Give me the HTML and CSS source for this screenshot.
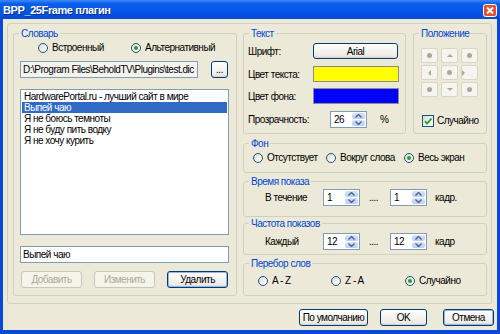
FILE: index.html
```html
<!DOCTYPE html>
<html lang="ru">
<head>
  <meta charset="UTF-8" />
  <title>BPP_25Frame плагин</title>
  <link rel="stylesheet" href="styles.css">
</head>
<body>
  <div class="window">
    <div class="titlebar">
      <span class="title">BPP_25Frame плагин</span>
      <svg class="close" width="14" height="13" viewBox="0 0 14 13">
        <rect x="0.5" y="0.5" width="13" height="12" rx="2" fill="#E1522E" stroke="#fff"/>
        <path d="M4 3.5 L10 9.5 M10 3.5 L4 9.5" stroke="#fff" stroke-width="1.8"/>
      </svg>
    </div>

    <div class="client">
      <div class="frame">

        <!-- Словарь -->
        <div class="group dict">
          <div class="group-title">Словарь</div>
          <div class="dict-body">
            <div class="dict-radios">
              <span class="radio first"><span class="rb"></span>Встроенный</span>
              <span class="radio"><span class="rb on"></span>Альтернативный</span>
            </div>
            <div class="path-row">
              <div class="edit path">D:\Program Files\BeholdTV\Plugins\test.dic</div>
              <button class="btn browse">...</button>
            </div>
            <div class="listbox">
              <div class="item">HardwarePortal.ru - лучший сайт в мире</div>
              <div class="item selected">Выпей чаю</div>
              <div class="item">Я не боюсь темноты</div>
              <div class="item">Я не буду пить водку</div>
              <div class="item">Я не хочу курить</div>
            </div>
            <div class="edit phrase">Выпей чаю</div>
            <div class="dict-buttons">
              <button class="btn disabled">Добавить</button>
              <button class="btn disabled">Изменить</button>
              <button class="btn focus">Удалить</button>
            </div>
          </div>
        </div>

        <div class="right">
          <div class="row-top">
            <!-- Текст -->
            <div class="group text-group">
              <div class="group-title">Текст</div>
              <div class="text-body">
                <div class="field-row r1">
                  <span class="lbl">Шрифт:</span>
                  <button class="btn font-btn">Arial</button>
                </div>
                <div class="field-row r2">
                  <span class="lbl">Цвет текста:</span>
                  <span class="swatch yellow"></span>
                </div>
                <div class="field-row r3">
                  <span class="lbl">Цвет фона:</span>
                  <span class="swatch blue"></span>
                </div>
                <div class="field-row r4">
                  <span class="lbl wide">Прозрачность:</span>
                  <div class="spin">
                    <span class="val">26</span>
                    <span class="arrows">
                      <span class="arr"><svg width="7" height="4" viewBox="0 0 7 4"><path d="M0.5 3.5 L3.5 0.5 L6.5 3.5" fill="none" stroke="#4D6185" stroke-width="1.4"/></svg></span>
                      <span class="arr"><svg width="7" height="4" viewBox="0 0 7 4"><path d="M0.5 0.5 L3.5 3.5 L6.5 0.5" fill="none" stroke="#4D6185" stroke-width="1.4"/></svg></span>
                    </span>
                  </div>
                  <span class="pct">%</span>
                </div>
              </div>
            </div>

            <!-- Положение -->
            <div class="group pos-group">
              <div class="group-title">Положение</div>
              <div class="pos-body">
                <div class="pos-grid">
                  <span class="pos-btn"><i class="dot"></i></span>
                  <span class="pos-btn"><i class="tri up"></i></span>
                  <span class="pos-btn"><i class="dot"></i></span>
                  <span class="pos-btn"><i class="tri left"></i></span>
                  <span class="pos-btn"><i class="dot"></i></span>
                  <span class="pos-btn"><i class="tri right"></i></span>
                  <span class="pos-btn"><i class="dot"></i></span>
                  <span class="pos-btn"><i class="tri down"></i></span>
                  <span class="pos-btn"><i class="dot"></i></span>
                </div>
                <div class="check-row">
                  <span class="cb">
                    <svg width="10" height="10" viewBox="0 0 10 10"><path d="M2 5 L4 7.5 L8.5 2.5" fill="none" stroke="#21A121" stroke-width="1.8"/></svg>
                  </span>
                  Случайно
                </div>
              </div>
            </div>
          </div>

          <!-- Фон -->
          <div class="group bg-group">
            <div class="group-title">Фон</div>
            <div class="bg-body">
              <span class="radio w73"><span class="rb"></span>Отсутствует</span>
              <span class="radio w78"><span class="rb"></span>Вокруг слова</span>
              <span class="radio"><span class="rb on"></span>Весь экран</span>
            </div>
          </div>

          <!-- Время показа -->
          <div class="group time-group">
            <div class="group-title">Время показа</div>
            <div class="spin-row t1">
              <span class="lbl">В течение</span>
              <div class="spin">
                <span class="val">1</span>
                <span class="arrows">
                  <span class="arr"><svg width="7" height="4" viewBox="0 0 7 4"><path d="M0.5 3.5 L3.5 0.5 L6.5 3.5" fill="none" stroke="#4D6185" stroke-width="1.4"/></svg></span>
                  <span class="arr"><svg width="7" height="4" viewBox="0 0 7 4"><path d="M0.5 0.5 L3.5 3.5 L6.5 0.5" fill="none" stroke="#4D6185" stroke-width="1.4"/></svg></span>
                </span>
              </div>
              <span class="dots">....</span>
              <div class="spin">
                <span class="val">1</span>
                <span class="arrows">
                  <span class="arr"><svg width="7" height="4" viewBox="0 0 7 4"><path d="M0.5 3.5 L3.5 0.5 L6.5 3.5" fill="none" stroke="#4D6185" stroke-width="1.4"/></svg></span>
                  <span class="arr"><svg width="7" height="4" viewBox="0 0 7 4"><path d="M0.5 0.5 L3.5 3.5 L6.5 0.5" fill="none" stroke="#4D6185" stroke-width="1.4"/></svg></span>
                </span>
              </div>
              <span class="unit">кадр.</span>
            </div>
          </div>

          <!-- Частота показов -->
          <div class="group freq-group">
            <div class="group-title">Частота показов</div>
            <div class="spin-row t2">
              <span class="lbl">Каждый</span>
              <div class="spin">
                <span class="val">12</span>
                <span class="arrows">
                  <span class="arr"><svg width="7" height="4" viewBox="0 0 7 4"><path d="M0.5 3.5 L3.5 0.5 L6.5 3.5" fill="none" stroke="#4D6185" stroke-width="1.4"/></svg></span>
                  <span class="arr"><svg width="7" height="4" viewBox="0 0 7 4"><path d="M0.5 0.5 L3.5 3.5 L6.5 0.5" fill="none" stroke="#4D6185" stroke-width="1.4"/></svg></span>
                </span>
              </div>
              <span class="dots">....</span>
              <div class="spin">
                <span class="val">12</span>
                <span class="arrows">
                  <span class="arr"><svg width="7" height="4" viewBox="0 0 7 4"><path d="M0.5 3.5 L3.5 0.5 L6.5 3.5" fill="none" stroke="#4D6185" stroke-width="1.4"/></svg></span>
                  <span class="arr"><svg width="7" height="4" viewBox="0 0 7 4"><path d="M0.5 0.5 L3.5 3.5 L6.5 0.5" fill="none" stroke="#4D6185" stroke-width="1.4"/></svg></span>
                </span>
              </div>
              <span class="unit">кадр</span>
            </div>
          </div>

          <!-- Перебор слов -->
          <div class="group order-group">
            <div class="group-title">Перебор слов</div>
            <div class="order-body">
              <span class="radio w73"><span class="rb"></span>A - Z</span>
              <span class="radio w74"><span class="rb"></span>Z - A</span>
              <span class="radio"><span class="rb on"></span>Случайно</span>
            </div>
          </div>
        </div>
      </div>

      <div class="footer">
        <button class="btn default-btn">По умолчанию</button>
        <button class="btn ok-btn">OK</button>
        <button class="btn focus cancel-btn">Отмена</button>
      </div>
    </div>
  </div>
</body>
</html>
```

FILE: styles.css
```css
* {
  box-sizing: border-box;
}

body {
  margin: 0;
  font-family: "Liberation Sans", Arial, sans-serif;
  font-size: 10px;
  letter-spacing: -0.5px;
  color: #000;
}

.window {
  width: 500px;
  height: 334px;
  background: #0A48D8;
  display: flex;
  flex-direction: column;
}

.titlebar {
  height: 19px;
  background: linear-gradient(to bottom, #3A8CF8 0%, #0A5CEA 20%, #0556E6 60%, #0049D6 100%);
  display: flex;
  align-items: center;
  justify-content: space-between;
  padding: 0 3px 0 3px;
  color: #fff;
  font-weight: bold;
  font-size: 11px;
  letter-spacing: -0.4px;
}

.title {
  text-shadow: 1px 1px 0 #0A2C8A;
}

.close {
  display: block;
  margin-top: 1px;
}

.client {
  flex: 1;
  margin: 0 3px 4px 3px;
  background: #ECE9D8;
  padding: 4px 0 0 4px;
}

.frame {
  width: 485px;
  height: 281px;
  border: 1px solid #D0D0BF;
  border-radius: 3px;
  padding: 9px 4px 7px 5px;
  display: flex;
  gap: 6px;
}

/* group boxes */
.group {
  border: 1px solid #D0D0BF;
  border-radius: 3px;
}

.group-title {
  display: table;
  margin: -7px 0 0 5px;
  padding: 0 2px;
  height: 13px;
  line-height: 13px;
  background: #ECE9D8;
  color: #0046D5;
}

/* controls */
.btn {
  font: inherit;
  letter-spacing: inherit;
  color: #000;
  height: 17px;
  padding: 0;
  border: 1px solid #003C74;
  border-radius: 3px;
  background: linear-gradient(to bottom, #FFFFFF 0%, #F4F3EE 50%, #ECEBE6 85%, #D6D0C5 100%);
}

.btn.disabled {
  color: #ACA899;
  border-color: #C9C7BA;
  background: #F5F4EA;
}

.btn.focus {
  box-shadow: inset 0 0 0 1px #99B6EA;
}

.edit {
  height: 17px;
  border: 1px solid #7F9DB9;
  background: #fff;
  padding: 0 2px;
  line-height: 15px;
  white-space: nowrap;
  overflow: hidden;
}

.radio {
  display: inline-flex;
  align-items: center;
  height: 13px;
  white-space: nowrap;
}

.rb {
  width: 10px;
  height: 10px;
  flex: none;
  border: 1px solid #1C5180;
  border-radius: 50%;
  background: linear-gradient(135deg, #DCDCD5, #FFFFFF);
  margin-right: 4px;
  display: inline-flex;
  align-items: center;
  justify-content: center;
}

.rb.on::after {
  content: "";
  width: 4px;
  height: 4px;
  border-radius: 50%;
  background: #21A121;
}

.spin {
  width: 37px;
  height: 17px;
  border: 1px solid #7F9DB9;
  background: #fff;
  display: flex;
}

.spin .val {
  flex: 1;
  padding-left: 3px;
  line-height: 15px;
}

.spin .arrows {
  width: 14px;
  display: flex;
  flex-direction: column;
  padding: 1px 1px 1px 0;
  gap: 1px;
}

.spin .arr {
  flex: 1;
  background: linear-gradient(to bottom, #D8E3FC, #B9CDF7);
  border-radius: 2px;
  display: flex;
  align-items: center;
  justify-content: center;
}

.spin .arr svg {
  display: block;
}

/* Словарь */
.dict {
  width: 224px;
}

.dict-body {
  padding: 0 7px 0 6px;
}

.dict-radios {
  display: flex;
  margin-top: 1px;
  padding-left: 18px;
}

.dict-radios .first {
  width: 93px;
}

.path-row {
  display: flex;
  margin-top: 7px;
}

.edit.path {
  width: 178px;
  background: #F4F3EE;
}

.browse {
  width: 17px;
  margin-left: 13px;
  line-height: 10px;
}

.listbox {
  margin-top: 11px;
  height: 146px;
  border: 1px solid #7F9DB9;
  background: #fff;
  padding: 1px;
}

.item {
  height: 11px;
  line-height: 11px;
  padding-left: 2px;
  white-space: nowrap;
}

.item.selected {
  background: #316AC5;
  color: #fff;
}

.edit.phrase {
  margin-top: 11px;
}

.dict-buttons {
  display: flex;
  justify-content: space-between;
  margin-top: 8px;
  padding: 0 1px;
}

.dict-buttons .btn {
  width: 61px;
}

/* right column */
.right {
  flex: 1;
  display: flex;
  flex-direction: column;
}

.row-top {
  display: flex;
  gap: 7px;
  height: 101px;
}

.text-group {
  width: 163px;
}

.pos-group {
  flex: 1;
}

.text-body {
  padding-left: 4px;
}

.field-row {
  display: flex;
  align-items: center;
  height: 16px;
}

.field-row.r1 { margin-top: 3px; }
.field-row.r2 { margin-top: 7px; }
.field-row.r3 { margin-top: 6px; }
.field-row.r4 { margin-top: 7px; height: 17px; }

.lbl {
  width: 65px;
  flex: none;
  white-space: nowrap;
}

.lbl.wide {
  width: 82px;
}

.font-btn {
  width: 85px;
  height: 16px;
}

.swatch {
  width: 86px;
  height: 16px;
  border: 1px solid #8C8C8C;
}

.swatch.yellow { background: #FFFF00; }
.swatch.blue { background: #0000FF; }

.pct {
  margin-left: 13px;
}

.pos-body {
  padding-left: 7px;
}

.pos-grid {
  margin-top: 8px;
  display: grid;
  grid-template-columns: repeat(3, 17px);
  grid-auto-rows: 15px;
  gap: 2px 3px;
}

.pos-btn {
  border: 1px solid #D8D5C6;
  border-radius: 2px;
  background: #F5F4EE;
  display: flex;
  align-items: center;
  justify-content: center;
}

.dot {
  width: 5px;
  height: 5px;
  border-radius: 50%;
  background: #ACA899;
}

.tri {
  width: 0;
  height: 0;
  border: 3px solid transparent;
}

.tri.up { border-bottom-color: #ACA899; border-top-width: 0; }
.tri.down { border-top-color: #ACA899; border-bottom-width: 0; }
.tri.left { border-right-color: #ACA899; border-left-width: 0; }
.tri.right { border-left-color: #ACA899; border-right-width: 0; }

.check-row {
  display: flex;
  align-items: center;
  height: 13px;
  margin-top: 17px;
}

.cb {
  width: 12px;
  height: 12px;
  margin-left: 1px;
  margin-right: 3px;
  border: 1px solid #1C5180;
  background: linear-gradient(135deg, #DCDCD5, #FFFFFF);
  display: flex;
  align-items: center;
  justify-content: center;
}

.cb svg {
  display: block;
}

.bg-group {
  margin-top: 9px;
  height: 30px;
}

.bg-body {
  display: flex;
  margin-top: 1px;
  padding-left: 9px;
}

.w73 { width: 73px; }
.w74 { width: 74px; }
.w78 { width: 78px; }

.time-group {
  margin-top: 8px;
  height: 36px;
}

.freq-group {
  margin-top: 6px;
  height: 32px;
}

.spin-row {
  display: flex;
  align-items: center;
  height: 17px;
  padding-left: 21px;
}

.spin-row.t1 { margin-top: 1px; }
.spin-row.t2 { margin-top: 3px; }

.spin-row .lbl {
  width: 58px;
}

.dots {
  width: 30px;
  padding-left: 9px;
}

.unit {
  margin-left: 8px;
}

.order-group {
  margin-top: 8px;
  height: 33px;
}

.order-body {
  display: flex;
  margin-top: 4px;
  padding-left: 14px;
}

/* bottom buttons */
.footer {
  display: flex;
  justify-content: flex-end;
  margin-top: 5px;
  padding-right: 3px;
}

.default-btn { width: 69px; }
.ok-btn { width: 47px; margin-left: 12px; }
.cancel-btn { width: 51px; margin-left: 16px; }
```
